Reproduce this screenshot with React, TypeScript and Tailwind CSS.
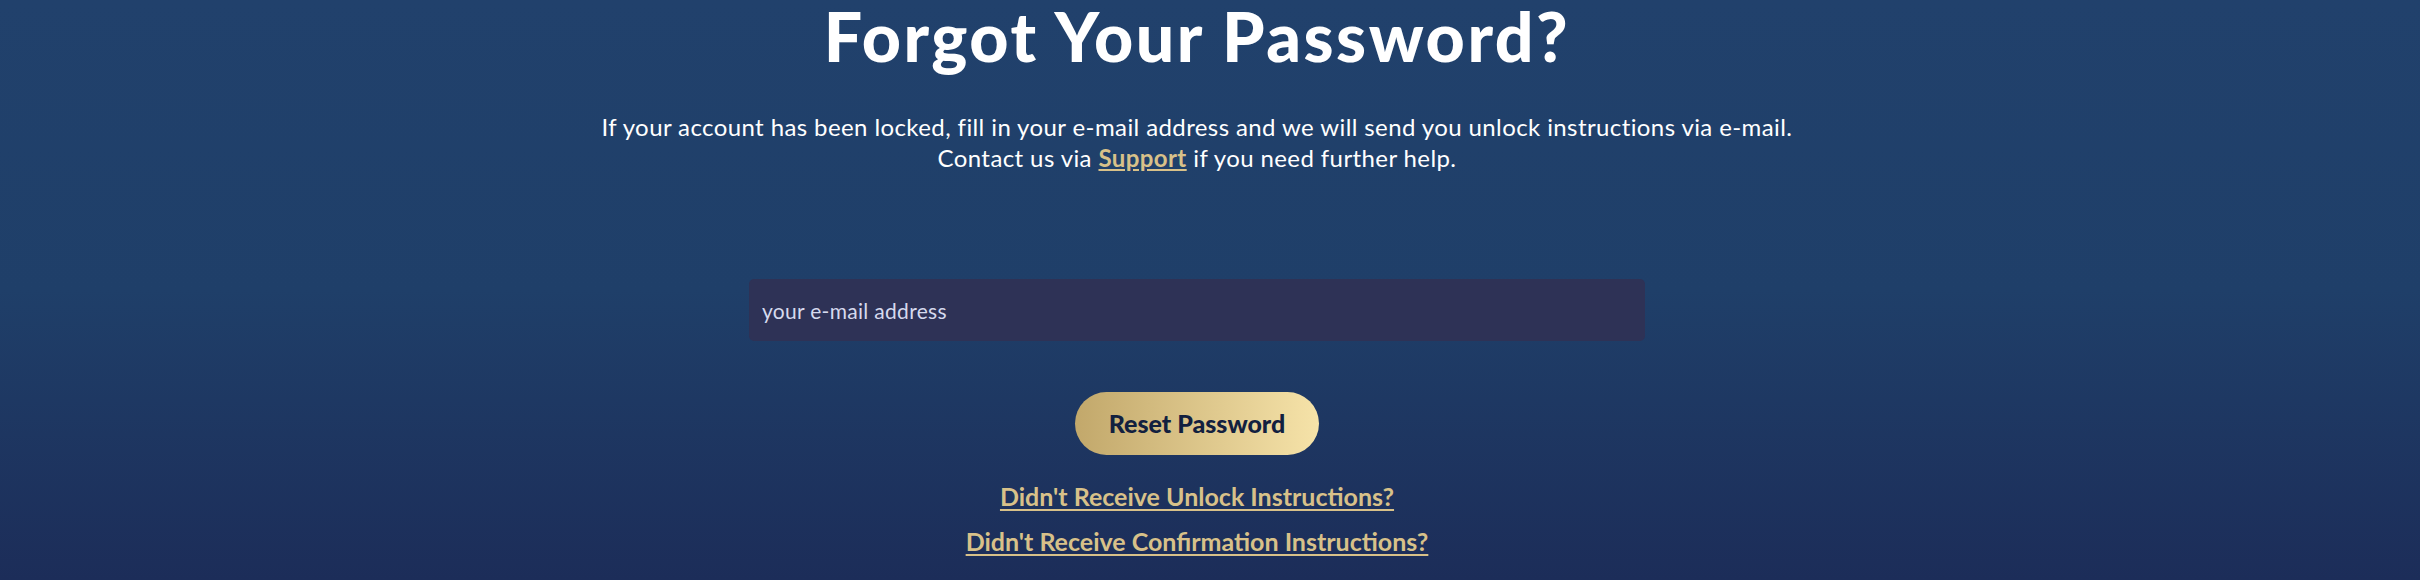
import React from "react";

export default function App() {
  return (
    <div
      className="w-full h-[580px] overflow-hidden bg-gradient-to-b from-[#21416c] via-[#1f3f69] to-[#1c2d59] flex flex-col items-center pr-[26px] text-white"
      style={{ fontFamily: "Lato, 'Noto Sans', sans-serif" }}
    >
      <h1 className="text-[68px] leading-[72px] font-black tracking-[2.5px]">Forgot Your Password?</h1>
      <p className="text-[24px] leading-[31px] tracking-[0.4px] text-center mt-[39px]">
        If your account has been locked, fill in your e-mail address and we will send you unlock instructions via e-mail.
        <br />
        Contact us via{" "}
        <a href="#" className="font-bold underline text-[#d8c189]">Support</a> if you need further help.
      </p>
      <input
        type="email"
        placeholder="your e-mail address"
        className="mt-[106px] w-[896px] h-[62px] rounded-[5px] bg-[#2e3256] px-[13px] text-[21px] tracking-[0.3px] text-white placeholder:text-[#d6daee] outline-none"
      />
      <button className="mt-[51px] w-[244px] h-[63px] rounded-full bg-gradient-to-r from-[#c2a86b] to-[#f6e3a9] text-[#12203f] text-[25px] font-black">
        Reset Password
      </button>
      <a href="#" className="mt-[26px] text-[25px] leading-[31px] font-bold underline decoration-2 underline-offset-[3px] text-[#d8c189]">Didn't Receive Unlock Instructions?</a>
      <a href="#" className="mt-[14px] text-[25px] leading-[31px] font-bold underline decoration-2 underline-offset-[3px] text-[#d8c189]">Didn't Receive Confirmation Instructions?</a>
    </div>
  );
}
